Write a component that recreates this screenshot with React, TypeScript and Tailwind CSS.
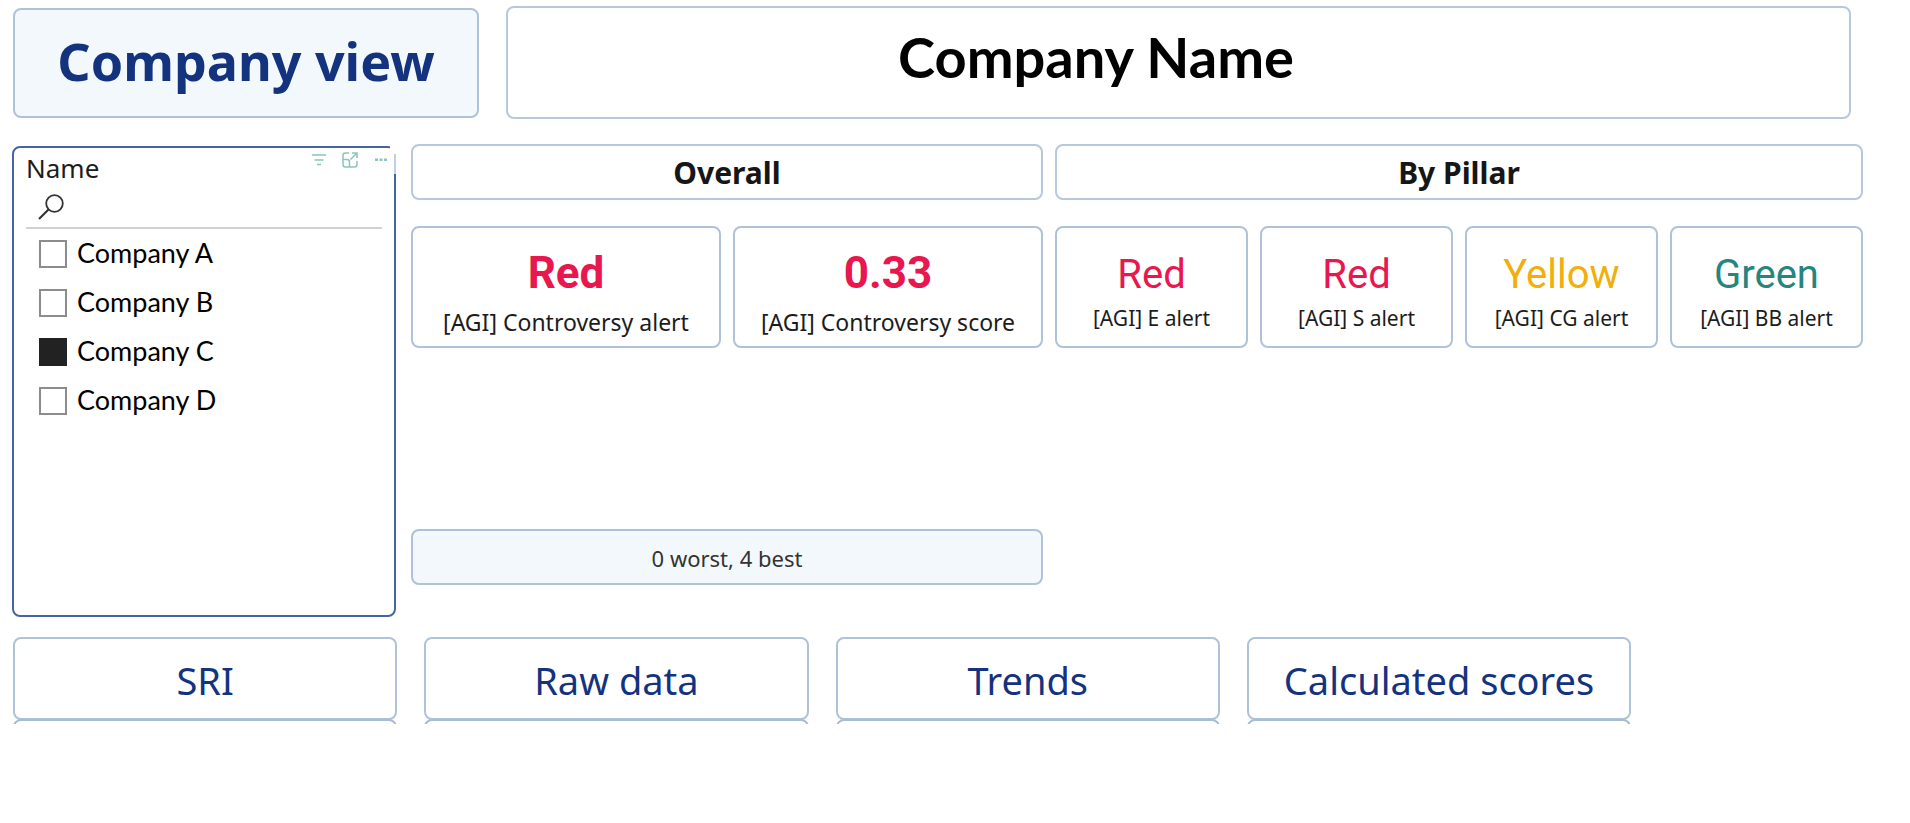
import { useState } from "react";

const COMPANIES = ["Company A", "Company B", "Company C", "Company D"];

const OVERALL = [
  { label: "[AGI] Controversy alert", value: "Red" },
  { label: "[AGI] Controversy score", value: "0.33" },
];

const PILLARS = [
  { label: "[AGI] E alert", value: "Red", color: "text-[#e8174f]" },
  { label: "[AGI] S alert", value: "Red", color: "text-[#e8174f]" },
  { label: "[AGI] CG alert", value: "Yellow", color: "text-[#f2ae0b]" },
  { label: "[AGI] BB alert", value: "Green", color: "text-[#26857f]" },
];

const PAGES = ["SRI", "Raw data", "Trends", "Calculated scores"];

function SlicerToolbar() {
  return (
    <div className="flex items-center gap-4 text-[#8cc5bd]">
      <button type="button" aria-label="Filters">
        <svg width="14" height="16" viewBox="0 0 14 16" fill="none" stroke="currentColor" strokeWidth="1.5">
          <path d="M0 3h14M2.5 8h9M5 12.5h4" />
        </svg>
      </button>
      <button type="button" aria-label="Focus mode">
        <svg width="16" height="16" viewBox="0 0 16 16" fill="none" stroke="currentColor" strokeWidth="1.5">
          <path d="M7 1H3.500Q1 1 1 3.500V12.500Q1 15 3.500 15H12.500Q15 15 15 12.500V9" />
          <path d="M1 7.500H5Q7.500 7.500 7.500 10V15M8.500 7.500L14.500 1.500M10 1H15V6" />
        </svg>
      </button>
      <button type="button" aria-label="More options">
        <svg width="14" height="16" viewBox="0 0 14 16" fill="currentColor">
          <path d="M1 6.500h3v2.500H1zM5.500 6.500h3v2.500h-3zM10 6.500h3v2.500h-3z" />
        </svg>
      </button>
    </div>
  );
}

function CompanySlicer() {
  const [selected, setSelected] = useState("Company C");
  const [search, setSearch] = useState("");

  const visible = COMPANIES.filter((name) =>
    name.toLowerCase().includes(search.toLowerCase()),
  );

  return (
    <section className="relative mr-[3px] h-[471px] rounded-lg border-2 border-[#4664a3] px-3">
      <span className="absolute -top-0.5 -right-0.5 h-7 w-1.5 bg-white" />
      <span className="absolute top-1.5 -right-0.5 h-5 w-0.5 bg-[#c3cde3]" />

      <div className="flex h-[39px] items-start justify-between">
        <h2 className="text-[26px] leading-10 text-[#1c1c1c]">Name</h2>
        <div className="-mr-1.5 pt-1">
          <SlicerToolbar />
        </div>
      </div>

      <div className="flex h-[42px] items-center gap-2 border-b-2 border-[#d2d2d2] pl-3">
        <svg width="26" height="26" viewBox="0 0 26 26" fill="none" stroke="#333" strokeWidth="1.8">
          <circle cx="16.500" cy="9.500" r="8.300" />
          <path d="M10.500 15.500L1 25" strokeWidth="2.200" />
        </svg>
        <input
          type="text"
          aria-label="Search"
          value={search}
          onChange={(e) => setSearch(e.target.value)}
          className="min-w-0 flex-1 text-lg outline-none"
        />
      </div>

      <ul className="pl-[13px]">
        {visible.map((name) => (
          <li key={name}>
            <label className="flex h-[49px] items-center gap-2.5 font-[Lato,sans-serif] text-[27px] text-black">
              <input
                type="checkbox"
                checked={selected === name}
                onChange={() => setSelected(name)}
                className="size-7 shrink-0 appearance-none border-2 border-[#8c8c8c] bg-white checked:border-[#222] checked:bg-[#222]"
              />
              {name}
            </label>
          </li>
        ))}
      </ul>
    </section>
  );
}

function SectionTitle({ children }: { children: string }) {
  return (
    <h2 className="flex h-14 items-center justify-center rounded-lg border-2 border-[#b7c7dc] text-[30px] font-bold text-[#161616]">
      {children}
    </h2>
  );
}

export default function App() {
  return (
    <div className="bg-white pb-24 font-['Noto_Sans',sans-serif]">
      <header className="grid grid-cols-[466fr_1345fr] items-center gap-[27px] pt-1.5 pr-[59px] pl-[13px]">
        <div className="flex h-[110px] items-center justify-center rounded-lg border-2 border-[#b0c2da] bg-[#f2f8fb] pb-1 text-[52px] font-bold text-[#14337f]">
          Company view
        </div>
        <h1 className="flex h-[113px] items-center justify-center rounded-lg border-2 border-[#b7c7dc] pr-[165px] pb-3 font-[Lato,sans-serif] text-[56px] font-bold text-black">
          Company Name
        </h1>
      </header>

      <main className="grid grid-cols-[387fr_632fr_808fr] gap-3 pt-[25px] pr-[47px] pl-3">
        <div className="pt-0.5">
          <CompanySlicer />
        </div>

        <section>
          <SectionTitle>Overall</SectionTitle>
          <div className="mt-[26px] grid grid-cols-2 gap-3">
            {OVERALL.map((card) => (
              <div
                key={card.label}
                className="flex h-[122px] flex-col items-center rounded-lg border-2 border-[#b0c2da] pt-5"
              >
                <p className="font-[Roboto,sans-serif] text-[44px] leading-[50px] font-bold text-[#e8174f]">
                  {card.value}
                </p>
                <p className="text-[23px] leading-[48px] whitespace-nowrap text-[#1c1c1c]">
                  {card.label}
                </p>
              </div>
            ))}
          </div>
          <p className="mt-[181px] flex h-14 items-center justify-center rounded-lg border-2 border-[#b0c2da] bg-[#f2f8fb] pt-0.5 text-[22px] text-[#333]">
            0 worst, 4 best
          </p>
        </section>

        <section>
          <SectionTitle>By Pillar</SectionTitle>
          <div className="mt-[26px] grid grid-cols-4 gap-3">
            {PILLARS.map((card) => (
              <div
                key={card.label}
                className="flex h-[122px] flex-col items-center rounded-lg border-2 border-[#b0c2da] pt-[22px]"
              >
                <p className={`font-[Roboto,sans-serif] text-[40px] leading-[50px] ${card.color}`}>
                  {card.value}
                </p>
                <p className="text-[21px] leading-9 whitespace-nowrap text-[#1c1c1c]">
                  {card.label}
                </p>
              </div>
            ))}
          </div>
        </section>
      </main>

      <nav className="grid grid-cols-4 gap-[27px] pt-5 pr-[14.6%] pl-[13px]">
        {PAGES.map((page) => (
          <div key={page}>
            <button
              type="button"
              className="flex h-[83px] w-full items-center justify-center rounded-lg border-2 border-[#b0c2da] pt-1 text-[38px] text-[#14337f]"
            >
              {page}
            </button>
            {/* upper edge of the next button row */}
            <div className="-mt-px h-[5px] overflow-hidden">
              <div className="h-10 rounded-lg border-2 border-[#a9bbd3]" />
            </div>
          </div>
        ))}
      </nav>
    </div>
  );
}
